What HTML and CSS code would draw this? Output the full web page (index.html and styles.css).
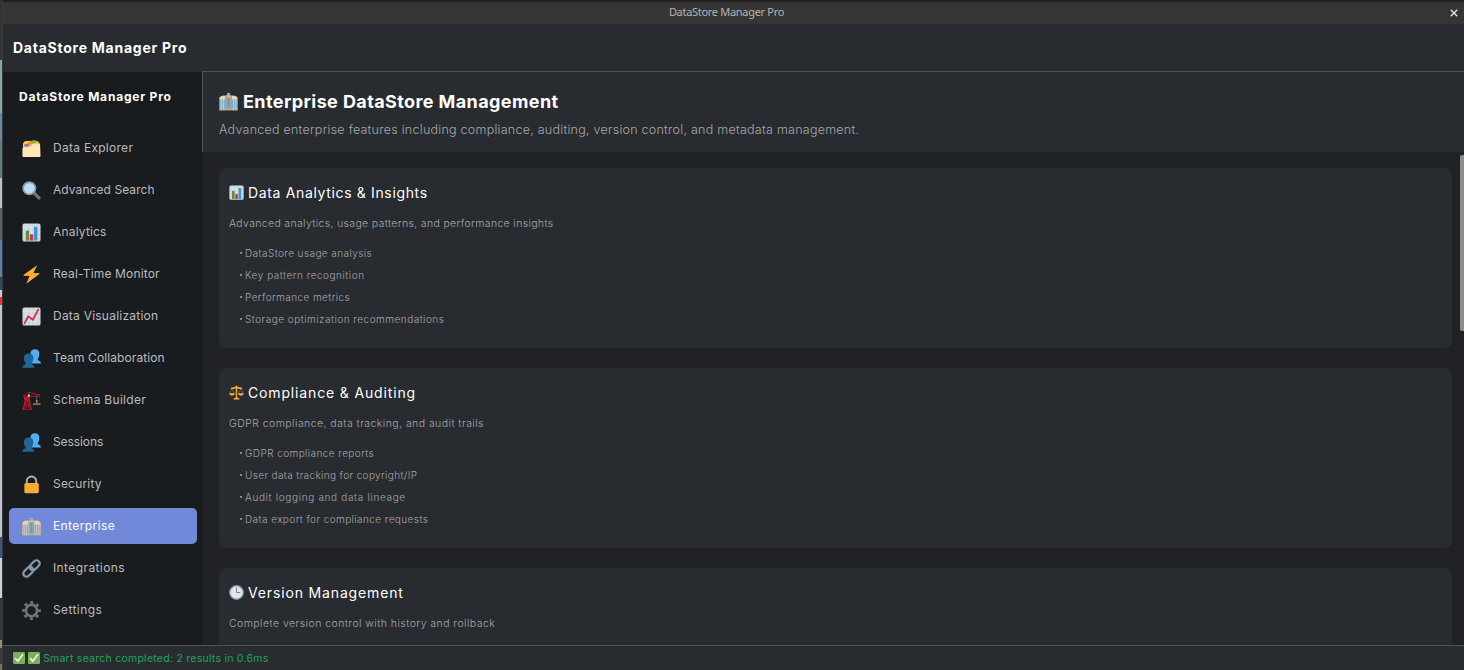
FILE: index.html
```html
<!DOCTYPE html>
<html lang="en">
<head>
<meta charset="utf-8">
<title>DataStore Manager Pro</title>
<link rel="stylesheet" href="styles.css">
</head>
<body>
<svg class="defs" width="0" height="0">
  <symbol id="i-folder" viewBox="0 0 20 20"><path d="M1 5Q2 2 4 2h11q3 0 4 4v4H1z" fill="#ffcc4d"/><path d="M9 2l4-1 3 1-1 2-5 .5z" fill="#77b255"/><path d="M5 4l5-1.500 2 2-3 2z" fill="#f4900c"/><path d="M.5 9.500V18q0 1 1 1h17q1 0 1-1L19 5.400h-8L8 8.500z" fill="#ffe8b6"/><ellipse cx="5" cy="6.500" rx="2.800" ry="1.600" fill="#9266cc"/></symbol>
  <symbol id="i-search" viewBox="0 0 20 20"><path d="M12.500 12.500 17.800 17.800" stroke="#66757f" stroke-width="3.600" stroke-linecap="round"/><circle cx="7.700" cy="7.700" r="6.500" fill="#bbddf5" stroke="#8899a6" stroke-width="1.800"/></symbol>
  <symbol id="i-bars" viewBox="0 0 20 20"><rect x=".5" y=".5" width="19" height="19" rx="2" fill="#ccd6dd"/><path d="M4.500 1v18M9.500 1v18M14.500 1v18M1 4.500h18M1 9.500h18M1 14.500h18" stroke="#e1e8ed" stroke-width=".9"/><path d="M4 8h3.500v10.500H4z" fill="#5c913b"/><path d="M8.300 12h3.500v6.500H8.300z" fill="#dd2e44"/><path d="M12.700 4h3.500v14.500h-3.500z" fill="#3b94d9"/></symbol>
  <symbol id="i-bolt" viewBox="0 0 20 20"><path d="M16 .2 1.800 10.300l-.2.900 6.300.3L4.500 19.800 18.300 9.500l.1-.9-6.400-.3z" fill="#ffac33"/></symbol>
  <symbol id="i-chart" viewBox="0 0 20 20"><rect x=".5" y=".5" width="19" height="19" rx="2" fill="#ccd6dd"/><path d="M4.500 1v18M9.500 1v18M14.500 1v18M1 4.500h18M1 9.500h18M1 14.500h18" stroke="#e1e8ed" stroke-width=".9"/><path d="M2.800 17 6.500 9.800l5 3.700L17 2.800" fill="none" stroke="#dd2e44" stroke-width="2" stroke-linecap="round" stroke-linejoin="round"/></symbol>
  <symbol id="i-team" viewBox="0 0 20 20"><path d="M13.500.3q4.800 0 4.800 5.200 0 3.300-1.800 5 0 1.500 2 2 1.500.5 1.500 2.700H9V4Q9.500.3 13.500.3z" fill="#55acee"/><path d="M7 4.700q5 0 5 5.200 0 3.200-2 5 0 1.500 1.500 2 1.500.5 1.500 2.900H.3q0-2.500 1.700-2.900 2-.5 2-2-2-1.800-2-5 0-5.200 5-5.200z" fill="#226699"/></symbol>
  <symbol id="i-crane" viewBox="0 0 20 20"><g fill="none" stroke="#be1931"><path d="M3.500 6v4L1.500 19M7.500 6v4l2 9" stroke-width="1.400"/><path d="M0 19.300h11M3.500 10h4.500M2.800 14h5.800M3.500 10l5 4-6 4.500M7.500 10l-4.700 4 6 4.500" stroke-width=".9"/><path d="M1 6 6 1.200l13 3.300v1H2z" stroke-width="1"/><path d="M2.500 6.500h5v2.500h-5z" fill="#be1931"/></g><path d="M6.200 3.500h2V6h-2z" fill="#ccd6dd"/><path d="M15.500 5.500V12" stroke="#66757f" stroke-width=".8"/><path d="M14.800 9.800h1.600v2.400h-1.600z" fill="#f4900c"/><path d="M11.500 12.800h8v2h-8z" fill="#66757f"/></symbol>
  <symbol id="i-lock" viewBox="0 0 20 20"><path d="M5 10V6.500a5 5 0 0 1 10 0V10" fill="none" stroke="#aab8c2" stroke-width="2"/><rect x="2.500" y="8.300" width="15.200" height="11" rx="1.800" fill="#ffac33"/></symbol>
  <symbol id="i-office" viewBox="0 0 20 20"><path d="M.5 5.500Q3 3.200 7 4v15.200H.5zM13 4q4-.8 6.500 1.500v13.700H13z" fill="#f3d2a2"/><path d="M2 8v9.500M4 8v9.500M6 8v9.500M14 8v9.500M16 8v9.500M18 8v9.500" stroke="#55acee" stroke-width="1.100"/><path d="M7 3.500h1.300V1.700L10 .7l1.700 1V3.500H13v15.700H7z" fill="#d9b88b"/><path d="M8.500 5.500v12M11.500 5.500v12" stroke="#4a9de0" stroke-width="1.300"/><path d="M10 6v11" stroke="#8b7b68" stroke-width=".8"/><path d="M8.600 2.200h2.800v1.200H8.600z" fill="#55acee"/><path d="M0 18.700h20" stroke="#b7a48b"/></symbol>
  <symbol id="i-link" viewBox="0 0 20 20"><g fill="none" stroke="#8899a6" stroke-width="2.400"><rect x="-6" y="-3.400" width="12" height="6.800" rx="3.400" transform="translate(13.400 6.600) rotate(-45)"/><rect x="-6" y="-3.400" width="12" height="6.800" rx="3.400" transform="translate(6.600 13.400) rotate(-45)"/></g></symbol>
  <symbol id="i-gear" viewBox="0 0 20 20"><circle cx="10" cy="10" r="8.400" fill="none" stroke="#66757f" stroke-width="3" stroke-dasharray="3.100 3.497" stroke-dashoffset="1.550"/><circle cx="10" cy="10" r="5.900" fill="none" stroke="#66757f" stroke-width="2.800"/></symbol>
  <symbol id="i-scale" viewBox="0 0 20 20"><path d="m4 4.500-3 7M4 4.500l3 7M16 4.500l-3 7M16 4.500l3 7" stroke="#66757f"/><path d="M10 .5v17M2.500 4.500Q6 4.500 10 3q4 1.500 7.500 1.500" fill="none" stroke="#ffac33" stroke-width="1.900"/><path d="M0 11h8q-.5 3.200-4 3.200T0 11zM12 11h8q-.5 3.200-4 3.200T12 11zM6 19.200q0-2.500 4-2.500t4 2.500z" fill="#ffac33"/></symbol>
  <symbol id="i-clock" viewBox="0 0 20 20"><circle cx="10" cy="10" r="9" fill="#e1e8ed" stroke="#8899a6" stroke-width="1.700"/><circle cx="10" cy="10" r="7.600" fill="none" stroke="#ccd6dd"/><path d="M10 3.500V10h5" fill="none" stroke="#66757f" stroke-width="1.200"/></symbol>
  <symbol id="i-check" viewBox="0 0 20 20"><rect width="20" height="20" rx="2" fill="#77b255"/><path d="m4 11 4 4.200L16 4.500" fill="none" stroke="#fff" stroke-width="2.500" stroke-linecap="round" stroke-linejoin="round"/></symbol>
</svg>
<div class="screen">
  <div class="backdrop"></div>
  <div class="window">
    <div class="titlebar">
      <span class="caption">DataStore Manager Pro</span>
      <svg class="close" viewBox="0 0 8 8"><path d="m.8.8 6.400 6.400M7.200.8.800 7.200" stroke="#e8e8e8" stroke-width="1.300"/></svg>
    </div>
    <header class="appbar">DataStore Manager Pro</header>
    <div class="body">
      <nav class="sidebar">
        <div class="brand">DataStore Manager Pro</div>
        <a class="item n1"><svg><use href="#i-folder"/></svg>Data Explorer</a>
        <a class="item n2"><svg><use href="#i-search"/></svg>Advanced Search</a>
        <a class="item n3"><svg><use href="#i-bars"/></svg>Analytics</a>
        <a class="item n4"><svg><use href="#i-bolt"/></svg>Real-Time Monitor</a>
        <a class="item n5"><svg><use href="#i-chart"/></svg>Data Visualization</a>
        <a class="item n6"><svg><use href="#i-team"/></svg>Team Collaboration</a>
        <a class="item n7"><svg><use href="#i-crane"/></svg>Schema Builder</a>
        <a class="item n8"><svg><use href="#i-team"/></svg>Sessions</a>
        <a class="item n9"><svg><use href="#i-lock"/></svg>Security</a>
        <a class="item n10 active"><svg><use href="#i-office"/></svg>Enterprise</a>
        <a class="item n11"><svg><use href="#i-link"/></svg>Integrations</a>
        <a class="item n12"><svg><use href="#i-gear"/></svg>Settings</a>
      </nav>
      <main class="content">
        <div class="page-head">
          <h1><svg><use href="#i-office"/></svg><span>Enterprise DataStore Management</span></h1>
          <p>Advanced enterprise features including compliance, auditing, version control, and metadata management.</p>
        </div>
        <div class="scroll">
          <div class="cards">
            <section class="card c1">
              <h2><svg><use href="#i-bars"/></svg><span>Data Analytics &amp; Insights</span></h2>
              <p>Advanced analytics, usage patterns, and performance insights</p>
              <ul><li><i>•</i><span>DataStore usage analysis</span></li><li><i>•</i><span>Key pattern recognition</span></li><li><i>•</i><span>Performance metrics</span></li><li><i>•</i><span>Storage optimization recommendations</span></li></ul>
            </section>
            <section class="card c2">
              <h2><svg><use href="#i-scale"/></svg><span>Compliance &amp; Auditing</span></h2>
              <p>GDPR compliance, data tracking, and audit trails</p>
              <ul><li><i>•</i><span>GDPR compliance reports</span></li><li><i>•</i><span>User data tracking for copyright/IP</span></li><li><i>•</i><span>Audit logging and data lineage</span></li><li><i>•</i><span>Data export for compliance requests</span></li></ul>
            </section>
            <section class="card c3">
              <h2><svg><use href="#i-clock"/></svg><span>Version Management</span></h2>
              <p>Complete version control with history and rollback</p>
            </section>
          </div>
          <div class="track"><div class="thumb"></div></div>
        </div>
      </main>
    </div>
    <footer class="status"><svg><use href="#i-check"/></svg><svg><use href="#i-check"/></svg><span>Smart search completed: 2 results in 0.6ms</span></footer>
  </div>
</div>
</body>
</html>
```
FILE: styles.css
```css
* { box-sizing: border-box; margin: 0; padding: 0; }
body { width: 1464px; height: 670px; overflow: hidden; background: #202225; font-family: Inter, "Open Sans", sans-serif; white-space: nowrap; }
.defs { display: block; width: 0; height: 0; }
.screen { display: flex; height: 670px; }
.backdrop { width: 2px; flex: none; background: linear-gradient(#333 0 60px, #86a99d 60px 113px, #6e86a6 113px 140px, #637f75 140px 178px, #b4bfd1 178px 208px, #59636f 208px 240px, #5c80b0 240px 277px, #344a4e 277px 290px, #c6c9d4 290px 297px, #fa2b36 297px 305px, #bfc4d3 305px 537px, #3d5487 537px 558px, #c4d1e2 558px 598px, #393735 598px 640px, #8e8b77 640px 648px, #3b3b3a 648px 664px, #77764f 664px); }
.window { flex: 1; min-width: 0; display: flex; flex-direction: column; border-left: 1px solid #37393b; }
.titlebar { height: 24px; flex: none; display: flex; align-items: center; justify-content: center; border-top: 2px solid #222; background: #353535; position: relative; }
.caption { font: 11px/20px "Noto Sans", sans-serif; color: #b4b4b4; letter-spacing: -0.3px; margin: 0 0 2px -14px; }
.close { position: absolute; right: 6px; top: 7px; width: 8px; height: 8px; }
.appbar { height: 47px; flex: none; padding-left: 10px; background: #282b30; color: #fff; font-size: 14px; font-weight: 700; line-height: 48px; letter-spacing: .75px; }
.body { flex: 1; min-height: 0; display: flex; background: #282b30; }
.sidebar { width: 199px; flex: none; margin-top: 1px; padding: 10px 5px 0 6px; background: #191c1e; }
.brand { height: 48px; padding-left: 10px; color: #fff; font-size: 12px; font-weight: 700; line-height: 30px; letter-spacing: .8px; }
.item { display: flex; align-items: center; height: 36px; margin-bottom: 6px; padding: 0 0 2px 13px; border-radius: 5px; color: #b9bbbe; font-size: 12px; letter-spacing: .4px; }
.item svg { width: 19px; height: 19px; margin: 2px 12px 0 0; }
.item.active { background: #7289da; color: #fff; }
.n1 { letter-spacing: .28px; }
.n2 { letter-spacing: .07px; }
.n3 { letter-spacing: .18px; }
.n4 { letter-spacing: .16px; }
.n5 { letter-spacing: .23px; }
.n6 { letter-spacing: .1px; }
.n7 { letter-spacing: .3px; }
.n8 { letter-spacing: -.08px; }
.n9 { letter-spacing: .2px; }
.content { flex: 1; min-width: 0; display: flex; flex-direction: column; }
.page-head { height: 81px; flex: none; border: solid #4f545c; border-width: 1px 0 0 1px; padding: 16px 0 0 16px; background: #282b30; }
h1 { display: flex; align-items: center; height: 27px; color: #fff; font-size: 18px; font-weight: 700; letter-spacing: .4px; }
h1 svg { width: 19px; height: 19px; margin-right: 5px; }
.page-head p { color: #a7a9ac; font-size: 12.500px; line-height: 29px; font-weight: 300; letter-spacing: .25px; }
.scroll { flex: 1; min-height: 0; display: flex; background: #202225; border-left: 1px solid #1b1d20; overflow: hidden; }
.cards { flex: 1; padding: 16px 8px 0 16px; }
.card { height: 180px; margin-bottom: 20px; padding: 11px 10px; border-radius: 7px; background: #282b30; }
h2 { display: flex; align-items: center; height: 26px; color: #fff; font-size: 14px; font-weight: 400; letter-spacing: .85px; }
h2 svg { width: 15px; height: 15px; margin-right: 4px; }
.c1 h2 { letter-spacing: .65px; }
.card p { height: 37px; color: #a7a9ac; font-size: 10.500px; line-height: 38px; font-weight: 300; letter-spacing: .44px; }
.c1 p { letter-spacing: .34px; }
ul { list-style: none; padding-left: 10px; }
li { display: flex; height: 22px; color: #a7a9ac; font-size: 10px; line-height: 22px; font-weight: 300; letter-spacing: .42px; }
li i { width: 6px; font-style: normal; font-size: 7px; }
.c1 li:nth-child(2) { letter-spacing: .52px; }
.c1 li:nth-child(4) { letter-spacing: .49px; }
.c2 li:nth-child(2) { letter-spacing: .37px; }
.c2 li:nth-child(3) { letter-spacing: .66px; }
.track { width: 4px; flex: none; padding-top: 3px; }
.thumb { height: 176px; border-radius: 2px 0 0 2px; background: #8d8d8e; }
.status { height: 25px; flex: none; display: flex; align-items: center; padding-left: 10px; border-top: 1px solid #4f545c; background: #282b30; color: #23a559; font-size: 10.500px; letter-spacing: .25px; }
.status svg { width: 12px; height: 12px; margin-right: 3px; }
```
